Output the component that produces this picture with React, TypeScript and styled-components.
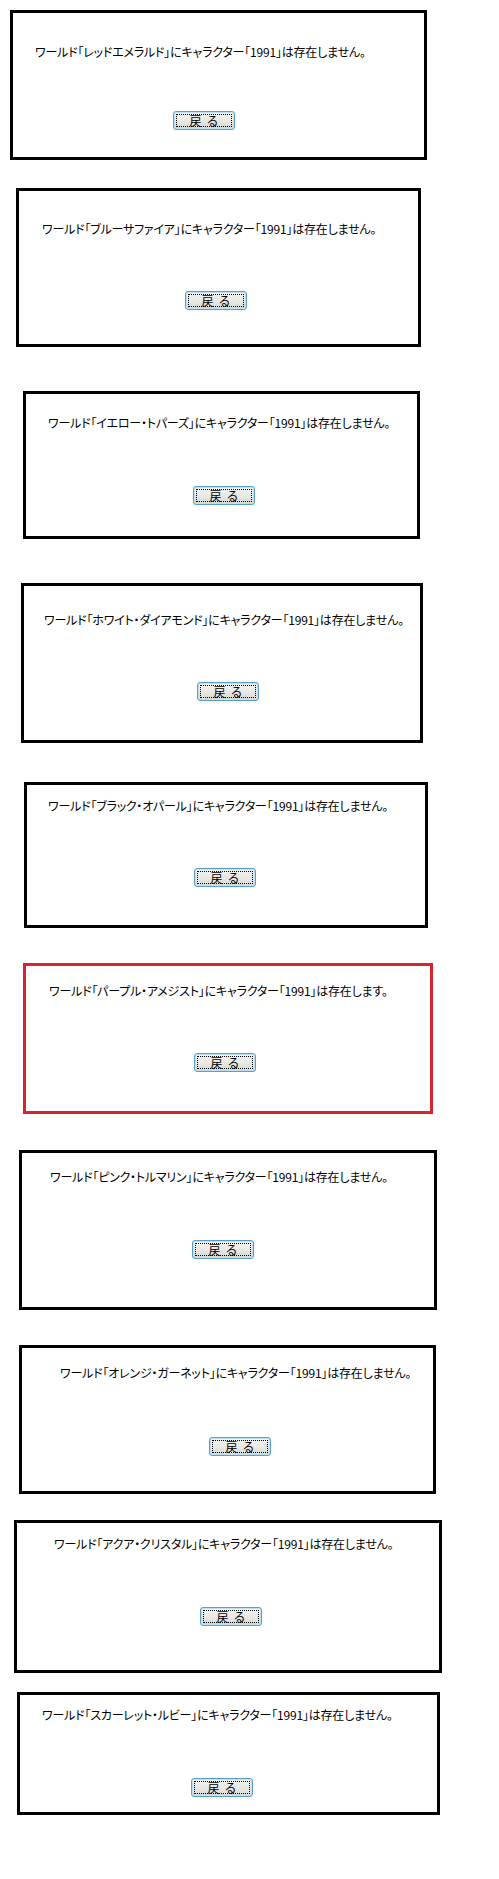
import { FC } from 'react';
import styled, { createGlobalStyle } from 'styled-components';

const GlobalStyle = createGlobalStyle`
	html, body {
		margin: 0;
		padding: 0;
		background: #fff;
	}
	body {
		font-family: 'Noto Sans CJK JP', 'Noto Sans', sans-serif;
	}
`;

type ResultType = {
	world: string;
	exists?: boolean;
	left: number;
	top: number;
	width: number;
	height: number;
	textLeft: number;
	textTop: number;
	buttonLeft: number;
	buttonGap: number;
};

const results: ResultType[] = [
	{ world: 'レッドエメラルド', left: 10, top: 10, width: 417, height: 150, textLeft: 22, textTop: 31, buttonLeft: 160, buttonGap: 51 },
	{ world: 'ブルーサファイア', left: 16, top: 28, width: 405, height: 159, textLeft: 23, textTop: 30, buttonLeft: 166, buttonGap: 54 },
	{ world: 'イエロー・トパーズ', left: 23, top: 44, width: 397, height: 148, textLeft: 22, textTop: 21, buttonLeft: 167, buttonGap: 55 },
	{ world: 'ホワイト・ダイアモンド', left: 21, top: 44, width: 402, height: 160, textLeft: 20, textTop: 26, buttonLeft: 173, buttonGap: 54 },
	{ world: 'ブラック・オパール', left: 24, top: 39, width: 404, height: 146, textLeft: 21, textTop: 13, buttonLeft: 167, buttonGap: 54 },
	{ world: 'パープル・アメジスト', exists: true, left: 23, top: 35, width: 410, height: 151, textLeft: 23, textTop: 17, buttonLeft: 168, buttonGap: 54 },
	{ world: 'ピンク・トルマリン', left: 19, top: 36, width: 418, height: 160, textLeft: 28, textTop: 16, buttonLeft: 170, buttonGap: 55 },
	{ world: 'オレンジ・ガーネット', left: 19, top: 35, width: 417, height: 149, textLeft: 38, textTop: 17, buttonLeft: 187, buttonGap: 56 },
	{ world: 'アクア・クリスタル', left: 14, top: 26, width: 428, height: 153, textLeft: 37, textTop: 13, buttonLeft: 183, buttonGap: 55 },
	{ world: 'スカーレット・ルビー', left: 17, top: 19, width: 423, height: 123, textLeft: 22, textTop: 12, buttonLeft: 171, buttonGap: 55 },
];

const ResultCard: FC<ResultType> = ({ world, exists, left, top, width, height, textLeft, textTop, buttonLeft, buttonGap }) => (
	<Card $left={left} $top={top} $width={width} $height={height} $found={!!exists}>
		<Message $left={textLeft} $top={textTop}>
			ワールド「{world}」にキャラクター「1991」は{exists ? '存在します。' : '存在しません。'}
		</Message>
		<ButtonRow $left={buttonLeft} $gap={buttonGap}>
			<BackButton type="button">
				<FocusRing>戻る</FocusRing>
			</BackButton>
		</ButtonRow>
	</Card>
);

const App: FC = () => (
	<>
		<GlobalStyle />
		<Page>
			{results.map((r) => (
				<ResultCard key={r.world} {...r} />
			))}
		</Page>
	</>
);

export default App;

const Page = styled.div`
	display: flex;
	flex-direction: column;
	align-items: flex-start;
	width: 499px;
	min-height: 1879px;
	background: #fff;
`;

const Card = styled.div<{ $left: number; $top: number; $width: number; $height: number; $found: boolean }>`
	box-sizing: border-box;
	margin-left: ${(p) => p.$left}px;
	margin-top: ${(p) => p.$top}px;
	width: ${(p) => p.$width}px;
	height: ${(p) => p.$height}px;
	border: 3px solid ${(p) => (p.$found ? '#d9232d' : '#000')};
	background: #fff;
	display: flex;
	flex-direction: column;
	align-items: flex-start;
`;

const Message = styled.p<{ $left: number; $top: number }>`
	margin: ${(p) => p.$top}px 0 0 ${(p) => p.$left}px;
	font-size: 12px;
	line-height: 16px;
	color: #000;
	white-space: nowrap;
	font-feature-settings: 'palt';
	letter-spacing: -0.2px;
`;

const ButtonRow = styled.div<{ $left: number; $gap: number }>`
	display: flex;
	margin: ${(p) => p.$gap}px 0 0 ${(p) => p.$left}px;
`;

const BackButton = styled.button`
	box-sizing: border-box;
	width: 62px;
	height: 19px;
	padding: 2px;
	border: 1px solid #5a9fcc;
	border-radius: 3px;
	background: linear-gradient(to bottom, #f4f4f2 0%, #e6e6e2 60%, #d6d6d0 100%);
	box-shadow: inset 0 0 0 1px #bfe0f4;
	display: flex;
	cursor: pointer;
`;

const FocusRing = styled.span`
	box-sizing: border-box;
	flex: 1;
	display: flex;
	align-items: center;
	justify-content: center;
	border: 1px dotted #000;
	font-family: 'Noto Sans CJK JP', sans-serif;
	font-size: 12px;
	line-height: 12px;
	letter-spacing: 5px;
	padding-left: 5px;
	color: #000;
`;
